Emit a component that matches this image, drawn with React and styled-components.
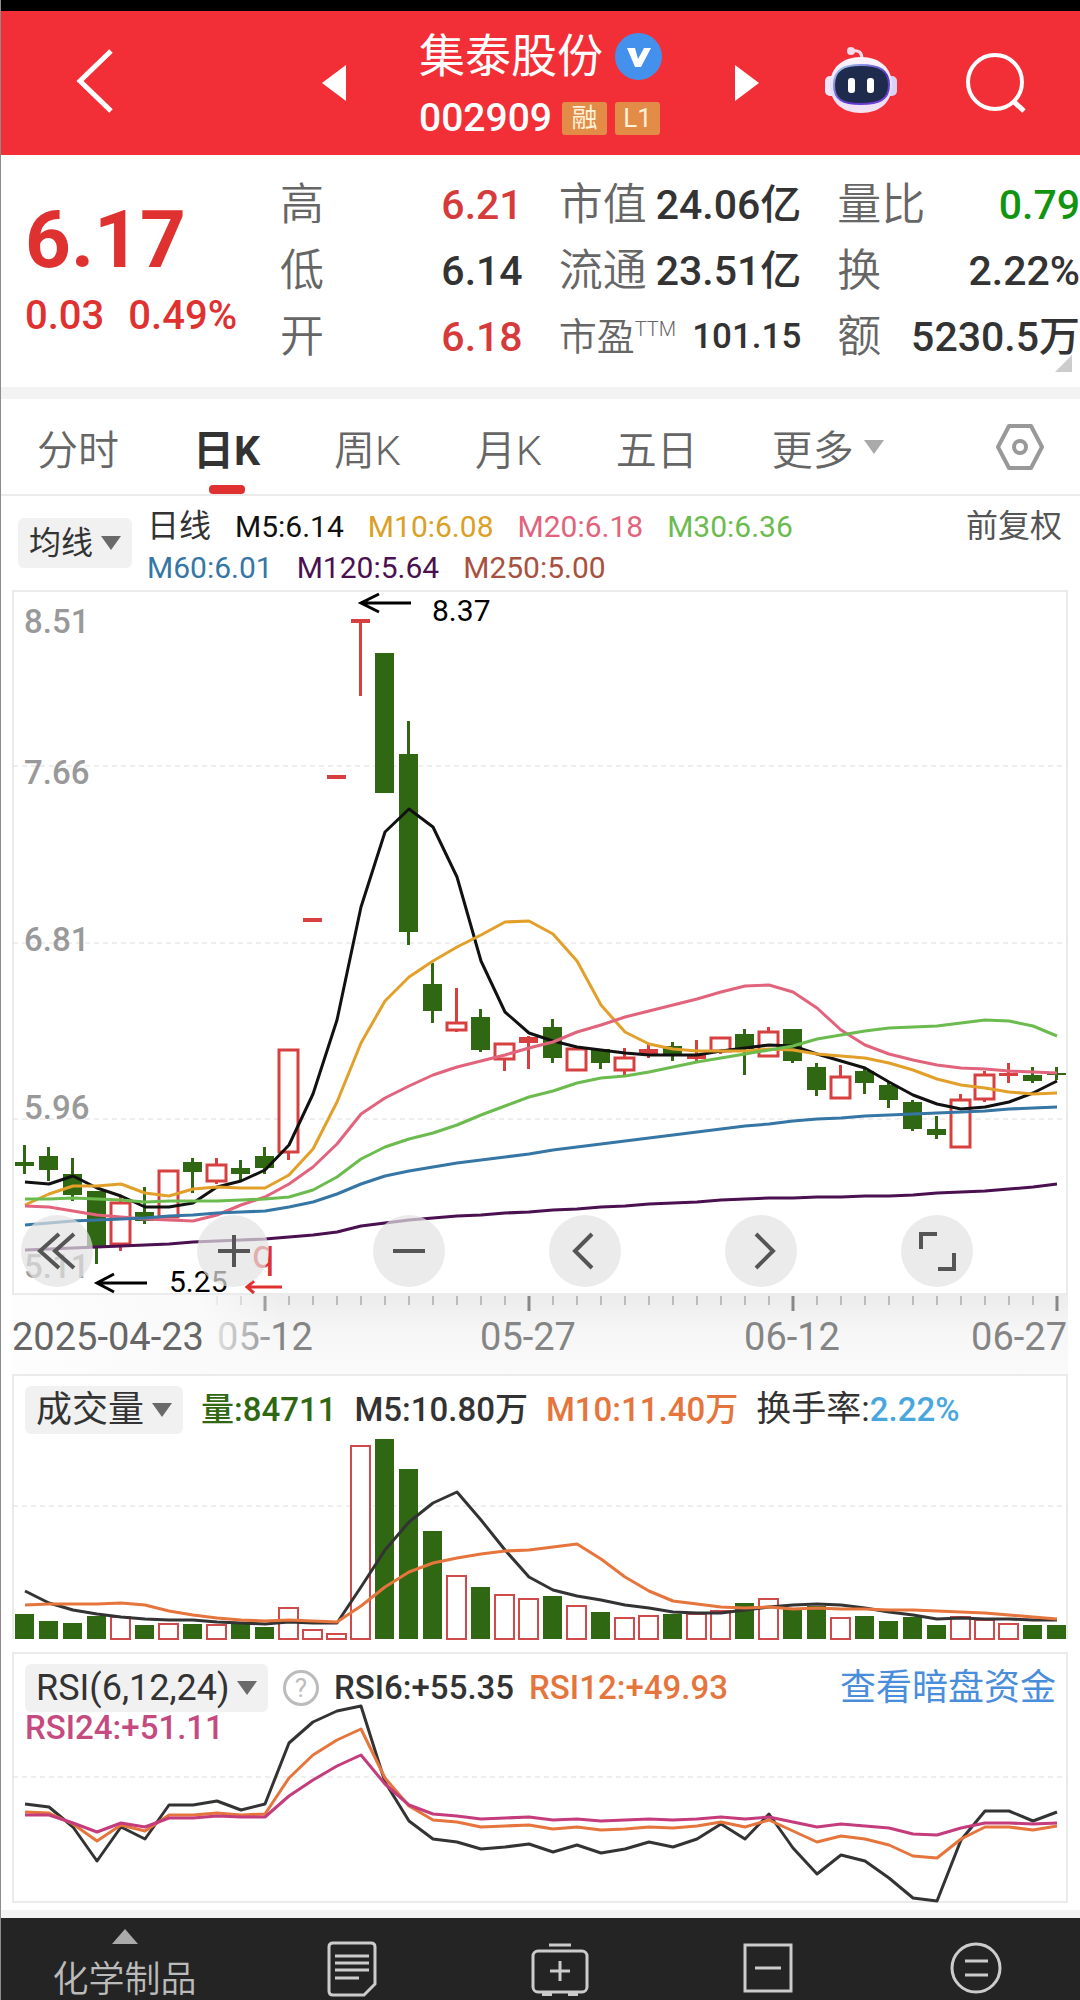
import { useState } from "react";
import styled, { createGlobalStyle } from "styled-components";

const GlobalStyle = createGlobalStyle`
  * {
    box-sizing: border-box;
  }

  body {
    margin: 0;
    background-color: #fff;
    color: #333;
    font-family: Roboto, "Noto Sans CJK SC", sans-serif;
  }

  button, select {
    margin: 0;
    padding: 0;
    border: 0;
    background: none;
    color: inherit;
    font: inherit;
    cursor: pointer;
  }

  svg {
    display: block;
  }
`;

const RED = "#e03131";
const CANDLE_RED = "#d84040";
const GREEN = "#306712";
const ORANGE = "#e5753c";

// one entry per trading day: [up, bodyTop, bodyBottom, wickTop, wickBottom]
const candles = [
  [0, 572, 576, 555, 584], [0, 566, 580, 557, 591], [0, 584, 605, 568, 611], [0, 601, 657, 601, 674],
  [1, 613, 654, 607, 661], [0, 622, 631, 597, 634], [1, 581, 627, 581, 628], [0, 572, 582, 568, 603],
  [1, 575, 591, 568, 594], [0, 578, 584, 570, 591], [0, 566, 578, 557, 584], [1, 460, 562, 460, 570],
  [1, 328, 332, 328, 332], [1, 185, 189, 185, 189], [1, 29, 33, 29, 106], [0, 63, 203, 63, 203],
  [0, 164, 342, 131, 355], [0, 394, 421, 373, 433], [1, 433, 440, 398, 442], [0, 427, 460, 419, 462],
  [1, 454, 469, 454, 481], [1, 447, 453, 446, 479], [0, 437, 468, 429, 473], [1, 459, 480, 459, 481],
  [0, 459, 473, 459, 479], [1, 468, 480, 458, 485], [1, 459, 464, 454, 468], [0, 456, 465, 452, 471],
  [1, 464, 469, 450, 471], [1, 448, 461, 448, 464], [0, 444, 459, 439, 485], [1, 442, 466, 437, 466],
  [0, 439, 471, 439, 473], [0, 477, 500, 473, 506], [1, 487, 508, 475, 508], [0, 481, 493, 478, 504],
  [0, 495, 510, 492, 518], [0, 512, 539, 510, 541], [0, 539, 545, 526, 549], [1, 510, 557, 504, 557],
  [1, 485, 509, 481, 512], [1, 483, 486, 473, 493], [0, 485, 491, 477, 493], [0, 483, 485, 477, 490],
];

const averages = [
  { color: "#4b1050", points: [660, 659, 658, 657, 656, 655, 654, 652, 651, 650, 649, 647, 645, 642, 636, 633, 630, 628, 626, 625, 623, 622, 620, 619, 617, 616, 614, 613, 612, 610, 609, 608, 608, 607, 607, 606, 606, 605, 603, 602, 601, 599, 597, 594] },
  { color: "#111", points: [592, 594, 586, 598, 606, 617, 617, 613, 597, 591, 580, 555, 504, 430, 317, 242, 219, 237, 287, 371, 422, 443, 451, 457, 460, 463, 465, 465, 465, 461, 458, 455, 456, 464, 471, 478, 492, 505, 514, 519, 517, 512, 503, 491] },
  { color: "#e2a02a", points: [615, 604, 596, 596, 594, 603, 606, 599, 597, 598, 598, 585, 559, 512, 453, 411, 387, 371, 357, 345, 332, 331, 344, 371, 415, 442, 454, 459, 461, 461, 461, 459, 460, 464, 466, 468, 473, 480, 489, 495, 498, 502, 504, 503] },
  { color: "#e2637c", points: [616, 617, 621, 625, 627, 629, 630, 631, 625, 615, 607, 594, 577, 554, 524, 508, 496, 485, 477, 471, 465, 458, 452, 442, 435, 427, 421, 415, 409, 402, 396, 395, 402, 418, 440, 455, 464, 470, 475, 478, 479, 481, 482, 483] },
  { color: "#6cbb4f", points: [609, 609, 608, 609, 610, 612, 611, 611, 611, 610, 609, 607, 600, 587, 569, 557, 549, 543, 535, 525, 516, 507, 501, 493, 488, 486, 482, 477, 472, 468, 464, 460, 456, 449, 445, 441, 438, 437, 436, 433, 430, 431, 436, 446] },
  { color: "#3676a5", points: [635, 633, 631, 630, 629, 628, 626, 625, 623, 622, 621, 617, 612, 604, 594, 586, 581, 577, 573, 570, 567, 564, 560, 557, 554, 551, 548, 545, 542, 539, 536, 534, 531, 529, 528, 526, 525, 524, 523, 522, 521, 519, 518, 517] },
];

const volumeTops = [
  240, 247, 249, 242, 242, 251, 249, 250, 250, 250, 253, 233, 255, 259, 71, 65, 95, 157, 201, 213, 220, 224,
  222, 231, 238, 243, 241, 240, 239, 236, 229, 224, 235, 232, 243, 242, 247, 243, 251, 242, 245, 249, 251, 251,
];

const volumeLines = [
  { color: "#333", points: [217, 229, 236, 240, 243, 245, 246, 246, 248, 249, 250, 248, 249, 249, 213, 176, 148, 129, 118, 146, 176, 203, 216, 222, 226, 231, 234, 238, 239, 239, 236, 233, 231, 230, 231, 234, 238, 241, 245, 244, 245, 245, 246, 246] },
  { color: ORANGE, points: [231, 230, 230, 230, 229, 231, 237, 241, 244, 246, 247, 246, 247, 248, 232, 213, 198, 189, 184, 180, 177, 176, 173, 170, 185, 203, 217, 227, 230, 233, 234, 233, 235, 234, 235, 235, 236, 236, 237, 238, 239, 241, 243, 245] },
];

const rsiLines = [
  { color: "#333", points: [152, 155, 175, 209, 175, 187, 153, 153, 149, 158, 152, 91, 70, 59, 54, 130, 169, 187, 190, 197, 195, 192, 200, 193, 201, 197, 190, 195, 187, 172, 187, 162, 196, 222, 203, 209, 226, 246, 249, 188, 159, 159, 169, 160] },
  { color: ORANGE, points: [160, 161, 172, 189, 173, 179, 163, 163, 161, 163, 162, 126, 103, 88, 77, 126, 154, 168, 170, 175, 174, 173, 177, 175, 178, 177, 175, 176, 174, 170, 175, 168, 179, 190, 184, 187, 193, 204, 206, 187, 175, 175, 178, 174] },
  { color: "#c43c7c", points: [163, 163, 171, 180, 171, 175, 166, 166, 164, 165, 165, 144, 128, 114, 103, 132, 153, 162, 164, 167, 166, 165, 168, 167, 169, 168, 167, 168, 167, 165, 167, 165, 170, 175, 172, 174, 176, 182, 183, 176, 171, 171, 172, 171] },
];

const Page = styled.div`
  display: flex;
  flex-direction: column;
  min-height: 100vh;
  border-left: 1px solid #8c8c8c;
`;

const StatusBar = styled.div`
  height: 11px;
  background-color: #000;
`;

const Header = styled.header`
  display: grid;
  grid-template-columns: 1fr auto 1fr;
  align-items: center;
  height: 144px;
  padding: 0 54px;
  background-color: #f22f37;
  color: #fff;
`;

const BackButton = styled.button`
  justify-self: start;
  margin-left: 20px;
`;

const StockSwitch = styled.div`
  display: flex;
  align-items: center;
  gap: 73px;
`;

const StockTitle = styled.div`
  display: flex;
  flex-direction: column;
  gap: 14px;
`;

const TitleRow = styled.div`
  display: flex;
  align-items: center;
  gap: 8px;
  height: ${({ $height }) => $height}px;
`;

const StockName = styled.h1`
  margin: 0 4px 0 0;
  font-size: 46px;
  font-weight: 400;
  line-height: 56px;
`;

const StockCode = styled.span`
  margin-right: 2px;
  font-size: 39px;
  font-weight: 500;
  line-height: 44px;
`;

const Badge = styled.span`
  width: 45px;
  border-radius: 3px;
  background-color: #e28c48;
  color: #fff1d8;
  font-size: 26px;
  line-height: 33px;
  text-align: center;
`;

const HeaderTools = styled.div`
  display: flex;
  justify-self: end;
  align-items: center;
  gap: 68px;
`;

const Quote = styled.section`
  position: relative;
  display: flex;
  height: 232px;
  padding-left: 24px;
`;

const PriceBlock = styled.div`
  width: 255px;
  padding-top: 37px;
  color: ${RED};
`;

const Price = styled.div`
  font-size: 80px;
  font-weight: 700;
  line-height: 96px;
`;

const Change = styled.div`
  display: flex;
  gap: 24px;
  font-size: 40px;
  font-weight: 500;
  line-height: 56px;
`;

const Stats = styled.dl`
  flex: 1;
  display: grid;
  grid-template-columns: repeat(3, 1fr);
  grid-auto-rows: 66px;
  column-gap: 36px;
  margin: 0;
  padding-top: 17px;
`;

const Stat = styled.div`
  display: flex;
  align-items: center;
  justify-content: space-between;
  white-space: nowrap;
  line-height: 66px;
`;

const StatLabel = styled.dt`
  color: #666;
  font-size: ${({ $small }) => ($small ? 38 : 44)}px;
  font-weight: 350;

  sup {
    font-size: 20px;
    line-height: 1;
  }
`;

const StatValue = styled.dd`
  margin: 0;
  color: ${({ $color }) => $color || "#333"};
  font-size: ${({ $small }) => ($small ? 35 : 41)}px;
  font-weight: 500;
`;

const Corner = styled.span`
  position: absolute;
  right: 8px;
  bottom: 15px;
  border-left: 17px solid transparent;
  border-bottom: 17px solid #ccc;
`;

const Divider = styled.div`
  height: ${({ $height }) => $height}px;
  background-color: #f3f3f3;
`;

const Tabs = styled.nav`
  display: flex;
  align-items: stretch;
  gap: 74px;
  height: 97px;
  padding: 0 36px;
  border-bottom: 2px solid #ebebeb;
`;

const Tab = styled.button`
  position: relative;
  display: flex;
  align-items: center;
  gap: 10px;
  color: ${({ $active }) => ($active ? "#333" : "#666")};
  font-size: 41px;
  font-weight: ${({ $active }) => ($active ? 700 : 350)};
  white-space: nowrap;

  &::after {
    content: "";
    display: ${({ $active }) => ($active ? "block" : "none")};
    position: absolute;
    bottom: 0;
    left: calc(50% - 18px);
    width: 36px;
    height: 9px;
    border-radius: 4px;
    background-color: ${RED};
  }
`;

const SettingsButton = styled.button`
  margin-left: auto;
`;

const LegendBar = styled.div`
  display: flex;
  align-items: flex-start;
  gap: 15px;
  padding: 10px 18px 0 17px;
  height: 94px;
`;

const Picker = styled.label`
  position: relative;
  flex: none;
  display: flex;
  align-items: center;
  margin-top: ${({ $top }) => $top || 0}px;

  select {
    appearance: none;
    height: ${({ $tall }) => ($tall ? 50 : 48)}px;
    padding: 0 38px 0 11px;
    border-radius: 6px;
    background-color: #f1f1f1;
    color: #333;
    font-size: ${({ $size }) => $size}px;
  }

  svg {
    position: absolute;
    right: 11px;
    pointer-events: none;
  }
`;

const LegendList = styled.div`
  flex: 1;
  display: flex;
  flex-wrap: wrap;
  column-gap: 24px;
  max-width: 700px;
  font-size: 30px;
  font-weight: 400;
  line-height: 41px;
`;

const LegendItem = styled.span`
  color: ${({ $color }) => $color || "#333"};
`;

const CjkText = styled.span`
  margin-left: ${({ $push }) => ($push ? "auto" : 0)};
  color: ${({ $color }) => $color || "#333"};
  font-size: 32px;
  line-height: 41px;
`;

const ChartArea = styled.section`
  position: relative;

  > svg {
    width: 100%;
    height: auto;
  }
`;

const ChartControls = styled.div`
  position: absolute;
  right: 107px;
  bottom: 87px;
  left: 20px;
  display: flex;
  justify-content: space-between;
`;

const RoundButton = styled.button`
  display: grid;
  place-items: center;
  width: 72px;
  height: 72px;
  border-radius: 50%;
  background-color: rgba(226, 226, 226, 0.7);
`;

const PanelHeader = styled.div`
  position: absolute;
  top: 12px;
  right: 24px;
  left: 24px;
  display: flex;
  flex-wrap: wrap;
  align-items: center;
  column-gap: ${({ $gap }) => $gap}px;
  font-size: 33px;
  line-height: 48px;
`;

const Metric = styled.span`
  color: ${({ $color }) => $color || "#333"};
  font-weight: 500;
  line-height: ${({ $low }) => ($low ? 32 : 48)}px;
`;

const MetricLabel = styled.span`
  font-size: 35px;
  font-weight: 400;
`;

const HelpButton = styled.button`
  width: 36px;
  height: 36px;
  border: 3px solid #bbb;
  border-radius: 50%;
  color: #bbb;
  font-size: 26px;
  line-height: 30px;
`;

const FundsLink = styled.a`
  margin-left: auto;
  color: #4a8edb;
  font-size: 36px;
  text-decoration: none;
`;

const BottomBar = styled.nav`
  flex: 1;
  display: grid;
  grid-template-columns: 247fr repeat(4, 208fr);
  min-height: 82px;
  background-color: #242424;
  color: #bbb;
`;

const BottomItem = styled.button`
  display: flex;
  flex-direction: column;
  align-items: center;
  padding-top: ${({ $top }) => $top}px;
  font-size: 36px;
  font-weight: 350;
  line-height: 40px;

  svg {
    flex: none;
  }

  span {
    margin-top: 16px;
  }
`;

const dayX = (i) => 24 + i * 24;
const toPoints = (values) => values.map((y, i) => `${dayX(i) + 1},${y}`).join(" ");

const Line = ({ color, points }) => (
  <polyline points={toPoints(points)} fill="none" stroke={color} strokeWidth="3" strokeLinejoin="round" />
);

const GridLine = ({ y }) => (
  <line x1="13" x2="1067" y1={y} y2={y} stroke="#ddd" strokeWidth="1" strokeDasharray="5 4" />
);

const DownTriangle = ({ color = "#6a6a6a" }) => (
  <svg width="20" height="14" viewBox="0 0 20 14"><path d="M0 0h20L10 14z" fill={color} /></svg>
);

const Candle = ({ index, data }) => {
  const [up, top, bottom, high, low] = data;
  const x = dayX(index);
  const color = up ? CANDLE_RED : GREEN;
  const hollow = up && bottom - top > 6;
  return (
    <g>
      {high < top && <line x1={x + 0.5} x2={x + 0.5} y1={high} y2={top} stroke={color} strokeWidth="3" />}
      {low > bottom && <line x1={x + 0.5} x2={x + 0.5} y1={bottom} y2={low} stroke={color} strokeWidth="3" />}
      {hollow ? (
        <rect x={x - 9} y={top} width="19" height={bottom - top} fill="#fff" stroke={color} strokeWidth="3" />
      ) : (
        <rect x={x - 9} y={top} width="19" height={bottom - top} fill={color} />
      )}
    </g>
  );
};

const PriceChart = () => (
  <svg viewBox="1 0 1079 705" role="img" aria-label="日K">
    <rect x="13" y="1" width="1054" height="703" fill="#fff" stroke="#ebebeb" strokeWidth="2" />
    {[176, 353, 529].map((y) => <GridLine key={y} y={y} />)}
    <g fill="#999" fontFamily="Roboto" fontSize="33" fontWeight="500">
      <text x="24" y="43">8.51</text>
      <text x="24" y="194">7.66</text>
      <text x="24" y="361">6.81</text>
      <text x="24" y="529">5.96</text>
      <text x="24" y="688">5.11</text>
    </g>
    {candles.map((data, i) => <Candle key={i} index={i} data={data} />)}
    {averages.map((line) => <Line key={line.color} {...line} />)}
    <g stroke="#000" strokeWidth="3" fill="none">
      <path d="M411 13H361M379 4L361 13L379 22" />
      <path d="M147 693H97M114 684L97 693L114 702" />
    </g>
    <g fontFamily="Roboto" fontSize="30">
      <text x="432" y="31">8.37</text>
      <text x="169" y="702">5.25</text>
    </g>
    <text x="252" y="678" fill={RED} fontFamily="Roboto" fontSize="40">q</text>
    <path d="M282 697H247M254 691L247 697L254 703" fill="none" stroke={RED} strokeWidth="3" />
  </svg>
);

const dayTicks = Array.from({ length: 36 }, (_, i) => i + 8);

const TimeAxis = () => (
  <svg viewBox="1 0 1079 79" role="img" aria-label="日期">
    <defs>
      <linearGradient id="axisShade" x2="0" y2="1">
        <stop offset="0" stopColor="#ececec" />
        <stop offset="0.5" stopColor="#f7f7f7" />
        <stop offset="1" stopColor="#fafafa" />
      </linearGradient>
      <linearGradient id="axisFade">
        <stop offset="0" stopColor="#fdfdfd" />
        <stop offset="0.7" stopColor="#fafafa" stopOpacity="0.95" />
        <stop offset="1" stopColor="#fafafa" stopOpacity="0" />
      </linearGradient>
    </defs>
    <rect x="12" y="0" width="1056" height="79" fill="url(#axisShade)" />
    {dayTicks.map((i) => {
      const major = i % 11 === 10;
      return (
        <line key={i} x1={dayX(i) + 1} x2={dayX(i) + 1} y1="1" y2={major ? 16 : 10} stroke={major ? "#888" : "#bbb"} strokeWidth={major ? 3 : 2} />
      );
    })}
    <g fill="#858585" fontFamily="Roboto" fontSize="38" textAnchor="middle">
      <text x="265" y="55">05-12</text>
      <text x="528" y="55">05-27</text>
      <text x="792" y="55">06-12</text>
      <text x="1067" y="55" textAnchor="end">06-27</text>
    </g>
    <rect x="12" y="0" width="270" height="79" fill="url(#axisFade)" />
    <text x="12" y="55" fill="#666" fontFamily="Roboto" fontSize="38">2025-04-23</text>
  </svg>
);

const VolumeChart = () => (
  <svg viewBox="1 0 1079 278" role="img" aria-label="成交量">
    <path d="M13 265V1H1067V265" fill="none" stroke="#ebebeb" strokeWidth="2" />
    <GridLine y={132} />
    {volumeTops.map((top, i) => {
      const up = candles[i][0];
      return (
        <rect
          key={i}
          x={dayX(i) - 9}
          y={up ? top + 1 : top}
          width="19"
          height={up ? 264 - top : 265 - top}
          fill={up ? "#fff" : GREEN}
          stroke={up ? "#cf4a4a" : "none"}
          strokeWidth="2"
        />
      );
    })}
    {volumeLines.map((line) => <Line key={line.color} {...line} />)}
  </svg>
);

const RsiChart = () => (
  <svg viewBox="1 0 1079 258" role="img" aria-label="RSI">
    <rect x="13" y="1" width="1054" height="249" fill="none" stroke="#ebebeb" strokeWidth="2" />
    <GridLine y={125} />
    {rsiLines.map((line) => <Line key={line.color} {...line} />)}
  </svg>
);

const Robot = () => (
  <svg width="74" height="72" viewBox="0 0 74 72">
    <defs>
      <linearGradient id="shell" x2="0" y2="1">
        <stop offset="0" stopColor="#fff5fb" />
        <stop offset="0.6" stopColor="#e3ddfa" />
        <stop offset="1" stopColor="#f6e3f2" />
      </linearGradient>
      <linearGradient id="rim" x2="1" y2="1">
        <stop offset="0" stopColor="#a8d2f4" />
        <stop offset="0.6" stopColor="#5a36c9" />
        <stop offset="1" stopColor="#7a4be0" />
      </linearGradient>
    </defs>
    <path d="M28 4Q38 2 38 12" fill="none" stroke="#fbdcea" strokeWidth="3" />
    <circle cx="27" cy="4" r="4" fill="#fbdcea" />
    <rect x="1" y="29" width="12" height="20" rx="5" fill="#efe6fb" />
    <rect x="61" y="29" width="12" height="20" rx="5" fill="#d9d2f6" />
    <path d="M37 10C56 10 68 21 68 38C68 55 56 66 37 66C18 66 6 55 6 38C6 21 18 10 37 10Z" fill="url(#shell)" />
    <path d="M37 18C55 18 65 23 65 38C65 53 55 57 37 57C19 57 10 53 10 38C10 23 19 18 37 18Z" fill="#1f2b4d" stroke="url(#rim)" strokeWidth="2" />
    <rect x="24" y="31" width="7" height="15" rx="3" fill="#fff" />
    <rect x="43" y="31" width="7" height="15" rx="3" fill="#fff" />
  </svg>
);

const tabs = ["分时", "日K", "周K", "月K", "五日", "更多"];

const legend = [
  ["M5:6.14", "#111"],
  ["M10:6.08", "#dba026"],
  ["M20:6.18", "#e2637c"],
  ["M30:6.36", "#6cbb4f"],
  ["M60:6.01", "#3676a5"],
  ["M120:5.64", "#4b1050"],
  ["M250:5.00", "#a9513f"],
];

const stats = [
  { label: "高", value: "6.21", color: "#d63a3a" },
  { label: "市值", value: "24.06亿" },
  { label: "量比", value: "0.79", color: "#119511" },
  { label: "低", value: "6.14" },
  { label: "流通", value: "23.51亿" },
  { label: "换", value: "2.22%" },
  { label: "开", value: "6.18", color: "#d63a3a" },
  { label: "市盈", value: "101.15", small: true, sup: "TTM" },
  { label: "额", value: "5230.5万" },
];

const controls = [
  ["向左滚动", "M22 3L3 20L22 37M37 3L18 20L37 37"],
  ["放大", "M21 4V36M5 20H37"],
  ["缩小", "M4 20H36"],
  ["前一日", "M27 3L10 20L27 37"],
  ["后一日", "M15 3L32 20L15 37"],
  ["全屏", "M20 3H4V18M21 38H37V22"],
];

export default function App() {
  const [tab, setTab] = useState("日K");

  return (
    <>
      <GlobalStyle />
      <Page>
        <StatusBar />
        <Header>
          <BackButton aria-label="返回">
            <svg width="40" height="68" viewBox="0 0 40 68"><path d="M36 2L5 32L36 62" fill="none" stroke="#fff" strokeWidth="5" /></svg>
          </BackButton>
          <StockSwitch>
            <button aria-label="上一只">
              <svg width="24" height="36" viewBox="0 0 24 36"><path d="M24 0V36L0 18z" fill="#fff" /></svg>
            </button>
            <StockTitle>
              <TitleRow $height={56}>
                <StockName>集泰股份</StockName>
                <svg width="47" height="47" viewBox="0 0 47 47">
                  <circle cx="23.5" cy="23.5" r="23.5" fill="#4491ed" />
                  <path d="M12 15h8l3 11 6-11h7L26 34h-6z" fill="#fff" />
                </svg>
              </TitleRow>
              <TitleRow $height={40}>
                <StockCode>002909</StockCode>
                <Badge>融</Badge>
                <Badge>L1</Badge>
              </TitleRow>
            </StockTitle>
            <button aria-label="下一只">
              <svg width="24" height="36" viewBox="0 0 24 36"><path d="M0 0V36L24 18z" fill="#fff" /></svg>
            </button>
          </StockSwitch>
          <HeaderTools>
            <button aria-label="智能助手"><Robot /></button>
            <button aria-label="搜索">
              <svg width="60" height="60" viewBox="0 0 60 60" fill="none" stroke="#fff" strokeWidth="4">
                <circle cx="29" cy="29" r="27" />
                <path d="M47 48L58 58" strokeWidth="5" />
              </svg>
            </button>
          </HeaderTools>
        </Header>

        <Quote>
          <PriceBlock>
            <Price>6.17</Price>
            <Change><span>0.03</span><span>0.49%</span></Change>
          </PriceBlock>
          <Stats>
            {stats.map(({ label, value, color, small, sup }) => (
              <Stat key={label}>
                <StatLabel $small={small}>{label}{sup && <sup>{sup}</sup>}</StatLabel>
                <StatValue $color={color} $small={small}>{value}</StatValue>
              </Stat>
            ))}
          </Stats>
          <Corner />
        </Quote>
        <Divider $height={12} />

        <Tabs>
          {tabs.map((name) => (
            <Tab key={name} $active={name === tab} onClick={() => setTab(name)}>
              {name}
              {name === "更多" && <DownTriangle color="#aaa" />}
            </Tab>
          ))}
          <SettingsButton aria-label="设置">
            <svg width="48" height="46" viewBox="0 0 48 46" fill="none" stroke="#999" strokeWidth="4" strokeLinejoin="round">
              <path d="M13 2H35L46 23L35 44H13L2 23Z" />
              <circle cx="24" cy="23" r="6" />
            </svg>
          </SettingsButton>
        </Tabs>

        <LegendBar>
          <Picker $size={32} $tall $top={12}>
            <select aria-label="指标"><option>均线</option></select>
            <DownTriangle />
          </Picker>
          <LegendList>
            <CjkText>日线</CjkText>
            {legend.map(([text, color]) => <LegendItem key={text} $color={color}>{text}</LegendItem>)}
          </LegendList>
          <CjkText $push $color="#555">前复权</CjkText>
        </LegendBar>

        <ChartArea>
          <PriceChart />
          <TimeAxis />
          <ChartControls>
            {controls.map(([name, d]) => (
              <RoundButton key={name} aria-label={name}>
                <svg width="40" height="40" viewBox="0 0 40 40"><path d={d} fill="none" stroke="#555" strokeWidth="4" /></svg>
              </RoundButton>
            ))}
          </ChartControls>
        </ChartArea>

        <ChartArea>
          <VolumeChart />
          <PanelHeader $gap={18}>
            <Picker $size={36}>
              <select aria-label="副图一"><option>成交量</option></select>
              <DownTriangle />
            </Picker>
            <Metric $color={GREEN}>量:84711</Metric>
            <Metric>M5:10.80万</Metric>
            <Metric $color={ORANGE}>M10:11.40万</Metric>
            <Metric><MetricLabel>换手率:</MetricLabel><Metric $color="#4aa7de">2.22%</Metric></Metric>
          </PanelHeader>
        </ChartArea>

        <ChartArea>
          <RsiChart />
          <PanelHeader $gap={15}>
            <Picker $size={36}>
              <select aria-label="副图二"><option>RSI(6,12,24)</option></select>
              <DownTriangle />
            </Picker>
            <HelpButton aria-label="说明">?</HelpButton>
            <Metric>RSI6:+55.35</Metric>
            <Metric $color={ORANGE}>RSI12:+49.93</Metric>
            <FundsLink href="#funds">查看暗盘资金</FundsLink>
            <Metric $color="#c44a80" $low>RSI24:+51.11</Metric>
          </PanelHeader>
        </ChartArea>
        <Divider $height={8} />

        <BottomBar>
          <BottomItem $top={11}>
            <svg width="26" height="15" viewBox="0 0 26 15"><path d="M13 0L26 15H0z" fill="#aaa" /></svg>
            <span>化学制品</span>
          </BottomItem>
          <BottomItem $top={23} aria-label="资讯">
            <svg width="50" height="56" viewBox="0 0 50 56" fill="none" stroke="#ccc" strokeWidth="3">
              <path d="M6 2H44Q48 2 48 6V43L37 54H6Q2 54 2 50V6Q2 2 6 2Z" />
              <path d="M8 15H42M8 22H42M8 29H42M8 37H32" />
            </svg>
          </BottomItem>
          <BottomItem $top={25} aria-label="加入自选">
            <svg width="58" height="54" viewBox="0 0 58 54" fill="none" stroke="#ccc" strokeWidth="3">
              <rect x="2" y="8" width="54" height="41" rx="5" />
              <path d="M18 2H40M29 18V38M19 28H39" />
              <path d="M11 51H21M37 51H47" strokeWidth="4" />
            </svg>
          </BottomItem>
          <BottomItem $top={25} aria-label="删除自选">
            <svg width="50" height="50" viewBox="0 0 50 50" fill="none" stroke="#ccc" strokeWidth="3">
              <path d="M2 2H48V48H2ZM12 25H38" />
            </svg>
          </BottomItem>
          <BottomItem $top={24} aria-label="更多功能">
            <svg width="52" height="52" viewBox="0 0 52 52" fill="none" stroke="#ccc" strokeWidth="3">
              <circle cx="26" cy="26" r="24" />
              <path d="M15 19H38M15 33H38" />
            </svg>
          </BottomItem>
        </BottomBar>
      </Page>
    </>
  );
}
